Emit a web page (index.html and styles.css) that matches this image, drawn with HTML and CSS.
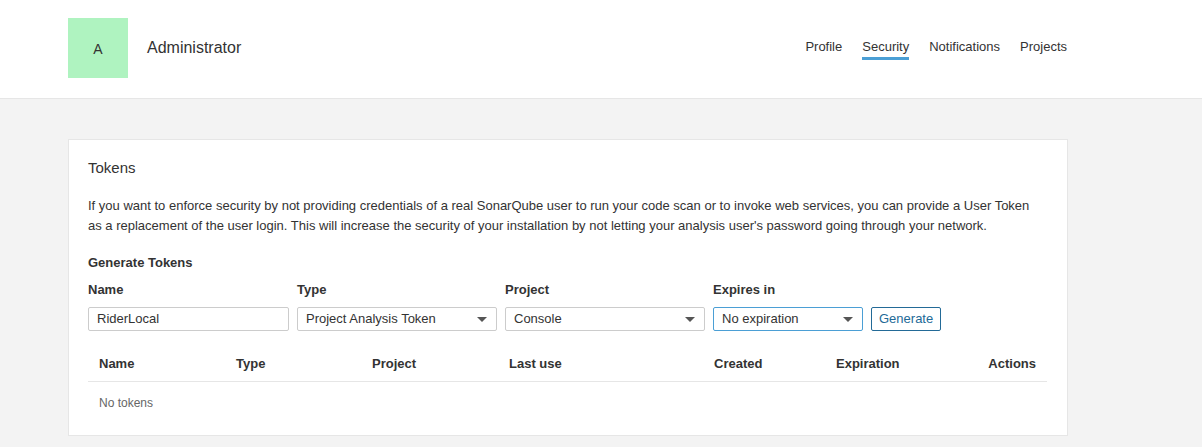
FILE: index.html
```html
<!DOCTYPE html>
<html>
<head>
<meta charset="utf-8">
<link rel="stylesheet" href="styles.css">
</head>
<body>
<header class="top">
  <div class="top-inner">
    <div class="user">
      <div class="avatar">A</div>
      <div class="user-name">Administrator</div>
    </div>
    <nav class="tabs">
      <a class="tab">Profile</a>
      <a class="tab active">Security</a>
      <a class="tab">Notifications</a>
      <a class="tab">Projects</a>
    </nav>
  </div>
</header>
<main class="page">
  <section class="card">
    <h2 class="card-title">Tokens</h2>
    <p class="desc">If you want to enforce security by not providing credentials of a real SonarQube user to run your code scan or to invoke web services, you can provide a User Token as a replacement of the user login. This will increase the security of your installation by not letting your analysis user's password going through your network.</p>
    <h3 class="sub-title">Generate Tokens</h3>
    <div class="form-row">
      <div class="field">
        <label class="label">Name</label>
        <div class="input">RiderLocal</div>
      </div>
      <div class="field">
        <label class="label">Type</label>
        <div class="select">Project Analysis Token<span class="caret"></span></div>
      </div>
      <div class="field">
        <label class="label">Project</label>
        <div class="select">Console<span class="caret"></span></div>
      </div>
      <div class="field field-last">
        <label class="label">Expires in</label>
        <div class="controls">
          <div class="select select-short focused">No expiration<span class="caret"></span></div>
          <button class="btn">Generate</button>
        </div>
      </div>
    </div>
    <table class="tokens">
      <thead>
        <tr>
          <th class="c-name">Name</th>
          <th class="c-type">Type</th>
          <th class="c-project">Project</th>
          <th class="c-last">Last use</th>
          <th class="c-created">Created</th>
          <th class="c-exp">Expiration</th>
          <th class="c-actions">Actions</th>
        </tr>
      </thead>
      <tbody>
        <tr>
          <td class="empty" colspan="7">No tokens</td>
        </tr>
      </tbody>
    </table>
  </section>
</main>
</body>
</html>
```
FILE: styles.css
```css
* { box-sizing: border-box; }
html, body { margin: 0; padding: 0; }
body {
  font-family: "Liberation Sans", Arial, sans-serif;
  font-size: 13px;
  color: #333;
  background: #f3f3f3;
  min-height: 447px;
}
.top {
  background: #fff;
  border-bottom: 1px solid #e6e6e6;
  height: 99px;
}
.top-inner {
  width: 1000px;
  margin-left: 68px;
  padding-top: 18px;
  display: flex;
  justify-content: space-between;
  align-items: flex-start;
}
.user { display: flex; align-items: center; }
.avatar {
  width: 60px;
  height: 60px;
  background: #aff3c0;
  display: flex;
  align-items: center;
  justify-content: center;
  font-size: 14px;
  color: #333;
  padding-top: 1px;
}
.user-name {
  margin-left: 19px;
  font-size: 16px;
  color: #333;
}
.tabs {
  display: flex;
  gap: 20px;
  padding-top: 20px;
  margin-right: 1px;
}
.tab {
  font-size: 13px;
  line-height: 18px;
  color: #333;
  padding-bottom: 1px;
  border-bottom: 3px solid transparent;
  cursor: pointer;
}
.tab.active { border-bottom-color: #4b9fd5; }
.page { padding-top: 40px; }
.card {
  width: 1000px;
  margin-left: 68px;
  background: #fff;
  border: 1px solid #e6e6e6;
  padding: 20px 20px 10px 19px;
}
.card-title {
  margin: 0;
  font-size: 15px;
  font-weight: normal;
  line-height: 15px;
  color: #333;
}
.desc {
  margin: 21px 0 0;
  padding-right: 3px;
  line-height: 20px;
}
.sub-title {
  margin: 18px 0 0;
  font-size: 13px;
  font-weight: bold;
  line-height: 18px;
}
.form-row {
  display: flex;
  gap: 8px;
  margin-top: 9px;
}
.field { display: flex; flex-direction: column; width: 201px; }
.field:nth-child(2), .field:nth-child(3) { width: 200px; }
.field-last { width: auto; }
.label {
  font-weight: bold;
  line-height: 18px;
  margin-bottom: 8px;
}
.input, .select {
  height: 24px;
  border: 1px solid #ccc;
  border-radius: 2px;
  padding: 0 8px;
  line-height: 22px;
  font-size: 13px;
  color: #333;
  background: #fff;
}
.select { position: relative; padding-right: 24px; }
.select-short { width: 150px; }
.focused { border-color: #4b9fd5; }
.caret {
  position: absolute;
  right: 9px;
  top: 9px;
  width: 0;
  height: 0;
  border-left: 5px solid transparent;
  border-right: 5px solid transparent;
  border-top: 5px solid #555;
}
.controls { display: flex; gap: 8px; }
.btn {
  height: 24px;
  border: 1px solid #236a97;
  border-radius: 2px;
  background: #fff;
  color: #236a97;
  font-family: "Liberation Sans", Arial, sans-serif;
  font-size: 13px;
  padding: 0 7px;
  line-height: 22px;
}
.tokens {
  width: 959px;
  border-collapse: collapse;
  margin-top: 16px;
}
.tokens th {
  text-align: left;
  font-weight: bold;
  line-height: 18px;
  padding: 8px 10px;
  border-bottom: 1px solid #e6e6e6;
}
.c-name { width: 138px; padding-left: 11px !important; }
.c-type { width: 136px; }
.c-project { width: 137px; }
.c-last { width: 205px; }
.c-created { width: 122px; }
.c-exp { width: auto; }
.c-actions { text-align: right !important; padding-right: 11px !important; }
.empty {
  font-size: 12px;
  color: #666;
  line-height: 18px;
  padding: 12px 11px 13px;
}
```
